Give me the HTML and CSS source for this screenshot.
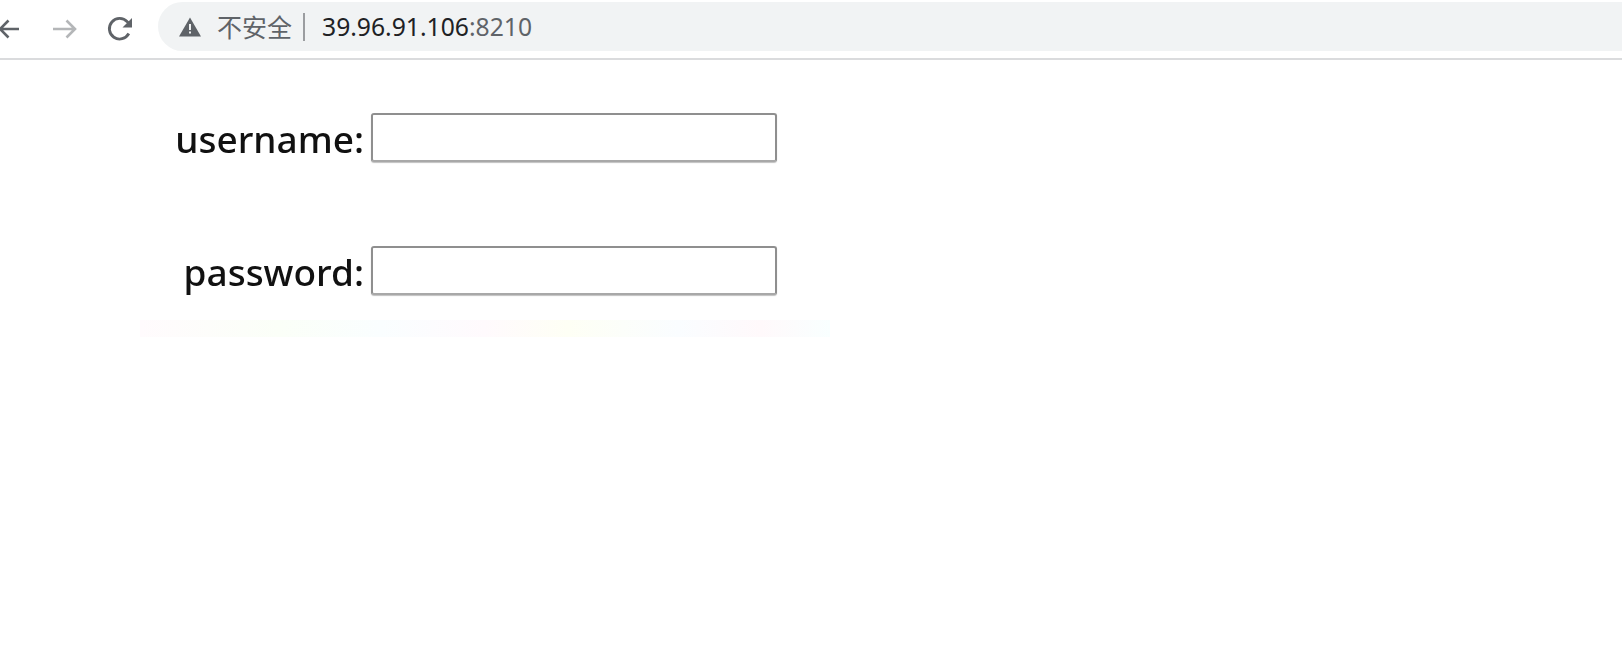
FILE: index.html
```html
<!DOCTYPE html>
<html lang="en">
<head>
    <meta charset="UTF-8">
    <meta name="viewport" content="width=device-width, initial-scale=1.0">
    <title>Login</title>
    <link rel="stylesheet" href="styles.css">
</head>
<body>
    <div class="toolbar">
        <svg class="nav-icon back" width="26" height="26" viewBox="0 0 26 26">
            <path d="M23 13H4M12.500 4.500L4 13l8.500 8.500" fill="none" stroke="#5f6368" stroke-width="2.600"/>
        </svg>
        <svg class="nav-icon forward" width="26" height="26" viewBox="0 0 26 26">
            <path d="M1 13h22M14.500 4.500L23 13l-8.500 8.500" fill="none" stroke="#b4b6b8" stroke-width="2.600"/>
        </svg>
        <svg class="nav-icon reload" width="28" height="28" viewBox="0 0 28 28">
            <path d="M22.800 18.500A10.300 10.300 0 1 1 21.300 6.800L24 9.500" fill="none" stroke="#5f6368" stroke-width="2.800"/>
            <path d="M26 3v9.500h-9.500z" fill="#5f6368"/>
        </svg>
        <div class="omnibox">
            <svg class="warn-icon" width="22" height="20" viewBox="0 0 22 20">
                <path d="M11 0.500L22 19.500H0z" fill="#5f6368"/>
                <path d="M10 7h2v6h-2zM10 14.500h2v2h-2z" fill="#f1f3f4"/>
            </svg>
            <span class="insecure">不安全</span>
            <span class="divider"></span>
            <span class="host">39.96.91.106</span><span class="port">:8210</span>
        </div>
    </div>

    <form class="login-form">
        <div class="form-row">
            <label for="username">username:</label>
            <input type="text" id="username" name="username">
        </div>
        <div class="form-row">
            <label for="password">password:</label>
            <input type="password" id="password" name="password">
        </div>
        <div class="form-edge"></div>
    </form>
</body>
</html>
```

FILE: styles.css
```css
body {
    font-family: "Noto Sans", "Noto Sans CJK SC", sans-serif;
    background-color: #ffffff;
    margin: 0;
    padding: 0;
    overflow: hidden;
}

.toolbar {
    display: flex;
    align-items: center;
    height: 58px;
    border-bottom: 2px solid #dadbdd;
    overflow: hidden;
}

.nav-icon {
    flex: none;
}

.back {
    margin-left: -4px;
}

.forward {
    margin-left: 30px;
}

.reload {
    margin-left: 28px;
}

.omnibox {
    display: flex;
    align-items: center;
    flex: 1;
    align-self: flex-start;
    height: 49px;
    margin-top: 2px;
    margin-left: 24px;
    margin-right: -40px;
    padding-left: 21px;
    background-color: #f1f3f4;
    border-radius: 25px;
    font-size: 24.700px;
    white-space: nowrap;
}

.insecure {
    margin-left: 16px;
    margin-bottom: 2px;
    color: #5f6368;
    font-family: "Noto Sans CJK SC", sans-serif;
    font-size: 25px;
}

.divider {
    width: 2px;
    height: 28px;
    margin: 0 17px 0 11px;
    background-color: #9b9da0;
}

.host {
    color: #202124;
}

.port {
    color: #5f6368;
}

.login-form {
    display: flex;
    flex-direction: column;
    padding-top: 53px;
}

.form-row {
    display: flex;
    align-items: flex-start;
    filter: blur(0.4px);
}

.form-row + .form-row {
    margin-top: 83px;
}

.form-row label {
    width: 364px;
    padding-top: 1px;
    color: #111111;
    font-size: 37px;
    font-weight: 500;
    line-height: 49px;
    text-align: right;
}

.form-row input {
    box-sizing: border-box;
    width: 406px;
    height: 49px;
    margin-left: 7px;
    padding: 0;
    background-color: #ffffff;
    border: 2px solid #8f8f8f;
    border-bottom-color: #a8a8a8;
    border-radius: 3px;
    box-shadow: 0 1px 1px rgba(0, 0, 0, 0.25);
}

/* faint leftover band under the form */
.form-edge {
    width: 690px;
    height: 17px;
    margin: 24px 0 0 140px;
    background: linear-gradient(90deg, #fffbfd, #fbfff8 20%, #fafeff 35%, #fffafd 50%, #fefff5 62%, #fafdff 78%, #fff9fb 90%, #f9ffff);
}
```
